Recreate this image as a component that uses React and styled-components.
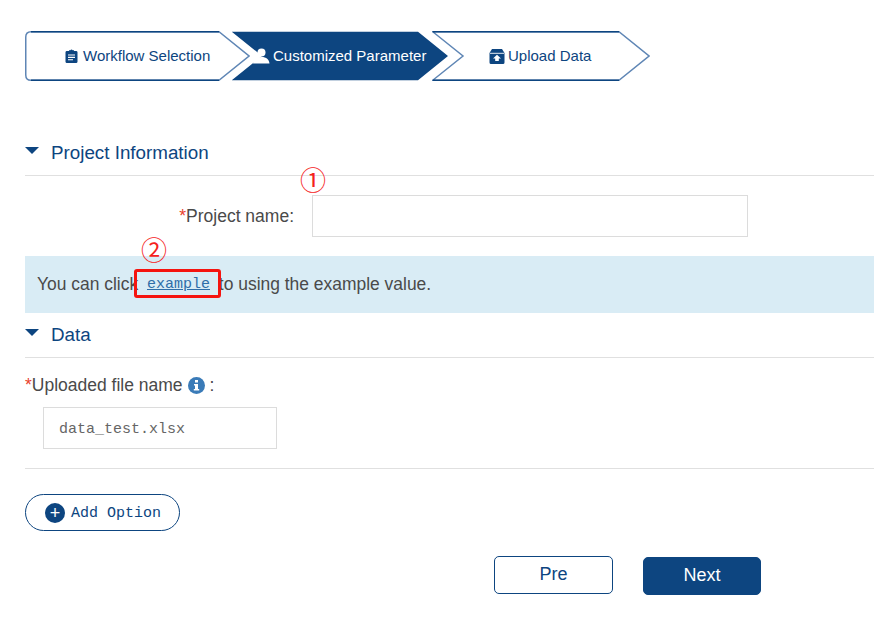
import React from "react";
import styled, { createGlobalStyle } from "styled-components";

const NAVY = "#0d4580";
const Global = createGlobalStyle`
  html, body { margin: 0; padding: 0; background: #fff; }
  body { font-family: "Liberation Sans", Arial, sans-serif; color: #4a4a4a; }
`;
const Page = styled.div`
  position: relative;
  width: 874px;
  height: 629px;
  overflow: hidden;
  padding: 31px 0 0 25px;
  box-sizing: border-box;
`;
const Steps = styled.nav`
  display: flex;
  height: 50px;
`;
const Step = styled.div`
  position: relative;
  width: ${(p) => p.$w}px;
  margin-left: ${(p) => p.$ml || 0}px;
  padding-left: ${(p) => p.$pl}px;
  box-sizing: border-box;
  display: flex;
  align-items: center;
  gap: ${(p) => p.$gap}px;
  font-size: 15px;
  color: ${(p) => (p.$active ? "#fff" : NAVY)};
`;
const StepShape = styled.svg`
  position: absolute;
  left: 0;
  top: 0;
  z-index: 0;
`;
const StepIcon = styled.svg`
  position: relative;
  flex: none;
`;
const StepLabel = styled.span`
  position: relative;
  white-space: nowrap;
  padding-bottom: 2px;
`;
const Section = styled.header`
  margin-top: ${(p) => p.$mt}px;
  padding-top: ${(p) => p.$pt || 0}px;
  height: ${(p) => p.$h}px;
  border-bottom: 1px solid #e0e0e0;
  display: flex;
  gap: 12px;
  color: ${NAVY};
  font-size: 18.8px;
  line-height: 22px;
`;
const Caret = styled.span`
  width: 0;
  height: 0;
  margin-top: 5px;
  border-left: 7px solid transparent;
  border-right: 7px solid transparent;
  border-top: 7px solid ${NAVY};
`;
const NameRow = styled.div`
  display: flex;
  align-items: center;
  margin-top: 19px;
  height: 42px;
`;
const Label = styled.label`
  font-size: 17.5px;
  color: #4a4a4a;
  white-space: nowrap;
`;
const NameLabel = styled(Label)`
  width: 269px;
  text-align: right;
  margin-right: 18px;
`;
const Star = styled.span`
  color: #e8402c;
`;
const NameInput = styled.div`
  width: 436px;
  height: 42px;
  box-sizing: border-box;
  border: 1px solid #dcdcdc;
`;
const Alert = styled.div`
  margin-top: 19px;
  height: 57px;
  background: #d9ecf5;
  display: flex;
  align-items: center;
  padding-left: 12px;
  font-size: 17.45px;
  color: #4a4a4a;
  white-space: pre;
`;
const ExampleLink = styled.a`
  font-family: "Liberation Mono", monospace;
  font-size: 15px;
  padding: 0 4px;
  color: #2f6ea8;
  text-decoration: underline;
`;
const FileLabel = styled(Label)`
  display: flex;
  align-items: center;
  gap: 5px;
  margin-top: 17px;
  height: 20px;
`;
const InfoIcon = styled.svg`
  flex: none;
`;
const FileBox = styled.div`
  margin: 12px 0 0 18px;
  width: 234px;
  height: 42px;
  box-sizing: border-box;
  border: 1px solid #dcdcdc;
  padding: 2px 0 0 15px;
  display: flex;
  align-items: center;
  font-family: "Liberation Mono", monospace;
  font-size: 15px;
  color: #666;
`;
const Divider = styled.hr`
  margin: 19px 0 0;
  border: 0;
  border-top: 1px solid #e0e0e0;
`;
const AddOption = styled.button`
  margin-top: 25px;
  width: 155px;
  height: 37px;
  box-sizing: border-box;
  border: 1px solid ${NAVY};
  border-radius: 19px;
  background: #fff;
  padding: 0 0 0 19px;
  display: flex;
  align-items: center;
  gap: 6px;
  font-family: "Liberation Mono", monospace;
  font-size: 15px;
  color: ${NAVY};
`;
const AddOptionLabel = styled.span`
  padding-top: 2px;
`;
const PlusDisc = styled.span`
  width: 20px;
  height: 20px;
  border-radius: 50%;
  background: ${NAVY};
  color: #fff;
  display: flex;
  align-items: center;
  justify-content: center;
  font-family: "Liberation Sans", sans-serif;
  font-size: 18px;
  line-height: 20px;
`;
const Actions = styled.div`
  margin: 25px 0 0 469px;
  display: flex;
  align-items: flex-start;
  gap: 30px;
`;
const Button = styled.button`
  width: ${(p) => (p.$primary ? 118 : 119)}px;
  height: 38px;
  margin-top: ${(p) => (p.$primary ? 1 : 0)}px;
  box-sizing: border-box;
  border: 1px solid ${NAVY};
  border-radius: 5px;
  background: ${(p) => (p.$primary ? NAVY : "#fff")};
  color: ${(p) => (p.$primary ? "#fff" : NAVY)};
  font-family: "Liberation Sans", sans-serif;
  font-size: 18px;
  font-weight: 400;
  padding: 0 0 2px;
`;
const Numeral = styled.span`
  position: absolute;
  left: ${(p) => p.$x}px;
  top: ${(p) => p.$y}px;
  font-family: "Noto Sans CJK SC", sans-serif;
  font-size: 26px;
  line-height: 30px;
  color: #f5221b;
`;
const Highlight = styled.div`
  position: absolute;
  left: 134px;
  top: 269px;
  width: 87px;
  height: 29px;
  box-sizing: border-box;
  border: 3px solid #f5140f;
  border-radius: 3px;
`;

const outline = "#5f86b5";
const Shape = ({ w, first, fill }) => {
  const bodyEnd = w - 31;
  const d = first
    ? `M6 0.75 H${bodyEnd} L${w - 1} 25 L${bodyEnd} 49.25 H6 Q0.75 49.25 0.75 44 V6 Q0.75 0.75 6 0.75 Z`
    : `M0.75 0.75 H${bodyEnd} L${w - 1} 25 L${bodyEnd} 49.25 H0.75 L31 25 Z`;
  return (
    <StepShape width={w} height={50} viewBox={`0 0 ${w} 50`} aria-hidden="true">
      <path d={d} fill={fill ? NAVY : "#fff"} stroke={fill ? "none" : outline} strokeWidth="1.5" />
      {!fill && <path d={`M${first ? 6 : 0.75} 0.75 H${bodyEnd} M${first ? 6 : 0.75} 49.25 H${bodyEnd}`} stroke={NAVY} strokeWidth="1.5" fill="none" />}
    </StepShape>
  );
};

export default function App() {
  return (
    <Page>
      <Global />
      <Steps>
        <Step $w={225} $pl={40} $gap={5}>
          <Shape w={225} first />
          <StepIcon width="13" height="14" viewBox="0 0 13 14" aria-hidden="true">
            <path fill={NAVY} d="M1.500 2H4V1.200h1.400a1.200 1.200 0 0 1 2.200 0H9V2h2.500A1.200 1.200 0 0 1 12.500 3.200V12.800A1.200 1.200 0 0 1 11.500 14h-10A1.200 1.200 0 0 1 .5 12.800V3.200A1.200 1.200 0 0 1 1.500 2Z" />
            <path stroke="#fff" strokeWidth="1.1" d="M3 6h7M3 8.400h7M3 10.800h5" />
          </StepIcon>
          <StepLabel>Workflow Selection</StepLabel>
        </Step>
        <Step $w={218} $ml={-19} $pl={21} $gap={3} $active>
          <Shape w={218} fill />
          <StepIcon width="18" height="16" viewBox="0 0 18 16" aria-hidden="true">
            <circle cx="9.500" cy="4.500" r="4" fill="#fff" />
            <path fill="#fff" d="M1 15.500c.5-4 3.500-6.500 8.500-6.500s7.500 2.500 8 6.500Z" />
          </StepIcon>
          <StepLabel>Customized Parameter</StepLabel>
        </Step>
        <Step $w={218} $ml={-17} $pl={57} $gap={3}>
          <Shape w={218} />
          <StepIcon width="16" height="15" viewBox="0 0 16 15" aria-hidden="true">
            <path fill={NAVY} d="M3 0H13L15.500 4V13.500A1.500 1.500 0 0 1 14 15H2A1.500 1.500 0 0 1 .5 13.500V4Z" />
            <path stroke="#fff" strokeWidth=".9" fill="none" d="M1 4.300H15" />
            <path fill="#fff" d="M8 5.800L12 9.500H9.800V12H6.200V9.500H4Z" />
          </StepIcon>
          <StepLabel>Upload Data</StepLabel>
        </Step>
      </Steps>

      <Section $mt={31} $pt={30} $h={33}>
        <Caret />
        Project Information
      </Section>
      <NameRow>
        <NameLabel><Star>*</Star>Project name:</NameLabel>
        <NameInput />
      </NameRow>
      <Alert>
        You can click <ExampleLink>example</ExampleLink> to using the example value.
      </Alert>

      <Section $mt={11} $h={33}>
        <Caret />
        Data
      </Section>
      <FileLabel>
        <span><Star>*</Star>Uploaded file name</span>
        <InfoIcon width="17" height="17" viewBox="0 0 17 17" aria-hidden="true">
          <circle cx="8.500" cy="8.500" r="8.500" fill="#3a7bb8" />
          <rect x="7" y="3" width="3" height="2.500" fill="#fff" />
          <path fill="#fff" d="M6 7h4v5h1.200v1.600H5.800V12H7V8.500H6Z" />
        </InfoIcon>
        <span>:</span>
      </FileLabel>
      <FileBox>data_test.xlsx</FileBox>
      <Divider />
      <AddOption><PlusDisc>+</PlusDisc><AddOptionLabel>Add Option</AddOptionLabel></AddOption>
      <Actions>
        <Button>Pre</Button>
        <Button $primary>Next</Button>
      </Actions>

      <Numeral $x={300} $y={164}>①</Numeral>
      <Numeral $x={141} $y={234}>②</Numeral>
      <Highlight />
    </Page>
  );
}
